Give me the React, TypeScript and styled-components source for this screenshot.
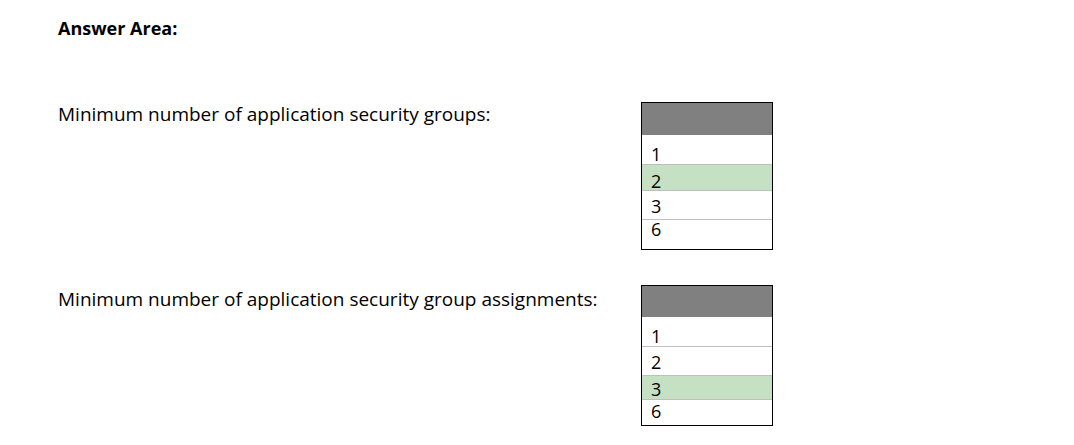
import React from 'react';
import styled, {createGlobalStyle} from 'styled-components';

const GlobalStyle = createGlobalStyle`
    html, body {
        margin: 0;
        padding: 0;
        background: #ffffff;
    }
    body {
        font-family: "Open Sans", "Liberation Sans", sans-serif;
        color: #000000;
    }
`;

const Page = styled.div`
    width: 1074px;
    height: 445px;
    box-sizing: border-box;
    padding: 16px 0 0 58px;
    overflow: hidden;
`;

const Title = styled.h1`
    margin: 0;
    font-size: 18px;
    font-weight: 700;
    line-height: 25px;
`;

const Question = styled.div<{$top: number}>`
    display: grid;
    grid-template-columns: 583px 132px;
    margin-top: ${(props) => props.$top}px;
`;

const Label = styled.p<{$shift: number}>`
    margin: 0;
    padding-top: ${(props) => props.$shift}px;
    font-size: 19px;
    line-height: 24px;
`;

const Table = styled.div`
    border: 1px solid #000000;
    display: flex;
    flex-direction: column;
`;

const Head = styled.div<{$h: number}>`
    height: ${(props) => props.$h}px;
    background: #808080;
`;

interface RowProps {
    $h: number;
    $pad: number;
    $picked: boolean;
    $last: boolean;
}

const Row = styled.div<RowProps>`
    height: ${(props) => props.$h}px;
    box-sizing: border-box;
    padding: ${(props) => props.$pad}px 0 0 9px;
    background: ${(props) => (props.$picked ? '#c5e0c3' : '#ffffff')};
    border-bottom: ${(props) => (props.$last ? 'none' : '1px solid #bfbfbf')};
    font-size: 18px;
    line-height: 12px;
`;

interface Choice {
    value: string;
    h: number;
    pad: number;
}

interface TableProps {
    head: number;
    items: Choice[];
    picked: string;
}

const DropTable = ({head, items, picked}: TableProps) => (
    <Table>
        <Head $h={head} />
        {items.map((item, i) => (
            <Row
                key={item.value}
                $h={item.h}
                $pad={item.pad}
                $picked={item.value === picked}
                $last={i === items.length - 1}
            >
                {item.value}
            </Row>
        ))}
    </Table>
);

export default function App() {
    return (
        <>
            <GlobalStyle />
            <Page>
                <Title>Answer Area:</Title>
                <Question $top={61}>
                    <Label $shift={0}>Minimum number of application security groups:</Label>
                    <DropTable
                        head={32}
                        picked="2"
                        items={[
                            {value: '1', h: 30, pad: 13},
                            {value: '2', h: 26, pad: 10},
                            {value: '3', h: 29, pad: 9},
                            {value: '6', h: 29, pad: 3},
                        ]}
                    />
                </Question>
                <Question $top={35}>
                    <Label $shift={2}>Minimum number of application security group assignments:</Label>
                    <DropTable
                        head={31}
                        picked="3"
                        items={[
                            {value: '1', h: 30, pad: 13},
                            {value: '2', h: 29, pad: 9},
                            {value: '3', h: 24, pad: 7},
                            {value: '6', h: 25, pad: 5},
                        ]}
                    />
                </Question>
            </Page>
        </>
    );
}
